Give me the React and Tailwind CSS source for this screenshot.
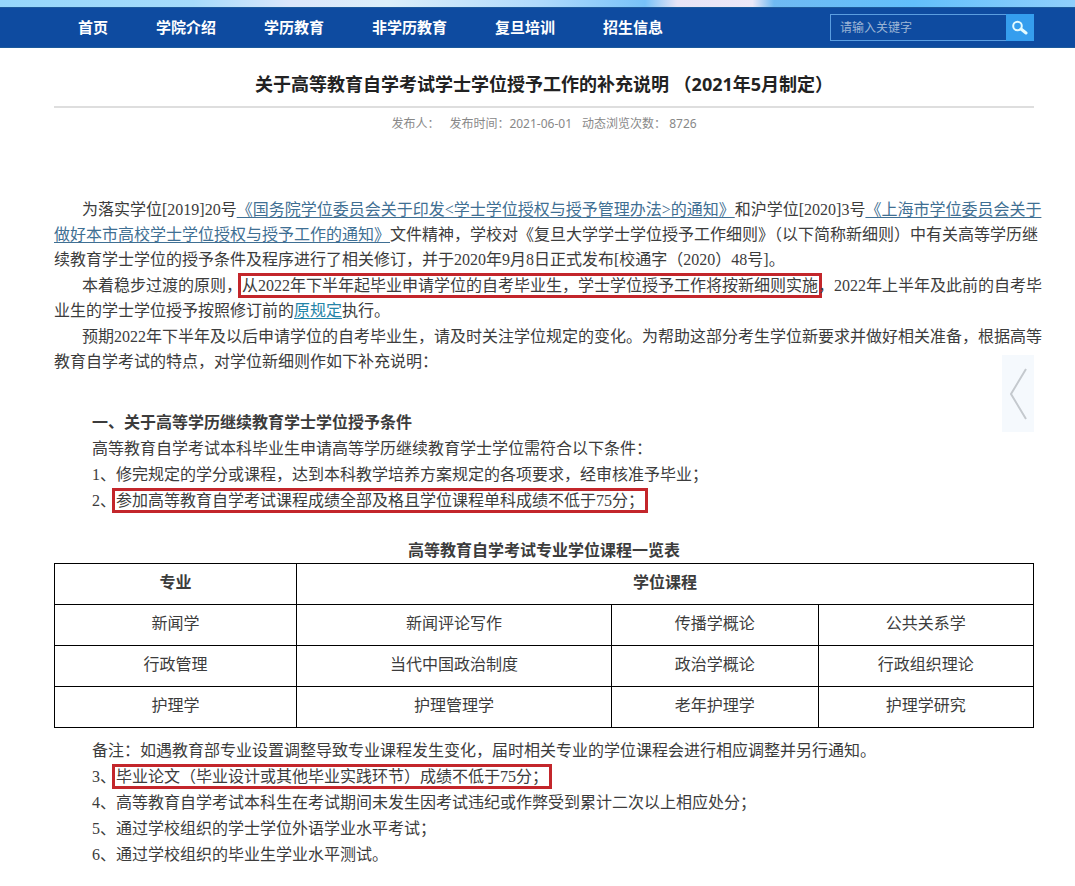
import React from "react";

const navItems = ["首页", "学院介绍", "学历教育", "非学历教育", "复旦培训", "招生信息"];

const courses = [
  ["新闻学", "新闻评论写作", "传播学概论", "公共关系学"],
  ["行政管理", "当代中国政治制度", "政治学概论", "行政组织理论"],
  ["护理学", "护理管理学", "老年护理学", "护理学研究"],
];

const cell = "h-[41px] border border-black pb-1 text-center align-middle";

function Mark({ children }) {
  return <span className="outline-3 outline-offset-1 outline-[#c3262b]">{children}</span>;
}

function Doc({ children }) {
  return (
    <a href="#" className="text-[#3f6f93] underline underline-offset-2">
      {children}
    </a>
  );
}

function Header() {
  return (
    <header>
      <div className="h-[7px] bg-[linear-gradient(90deg,#95d6fb_0%,#a5dbfb_18%,#dbe6fb_27%,#dceffa_36%,#b0dafc_50%,#78c2f8_60%,#e8e4f6_63%,#ece8f8_70%,#6fbaf3_72%,#62bffb_85%,#90cffc_100%)]" />
      <div className="flex h-[41px] items-center justify-between border-y border-[#1c5a9c] bg-[#0e4ba0] pr-[41px] pl-[78px]">
        <nav className="flex gap-12 text-[15px] font-bold text-white">
          {navItems.map((item) => (
            <a key={item} href="#">
              {item}
            </a>
          ))}
        </nav>
        <form className="flex h-[27px] w-[204px]" onSubmit={(e) => e.preventDefault()}>
          <input
            type="text"
            aria-label="请输入关键字"
            placeholder="请输入关键字"
            className="min-w-0 flex-1 border border-r-0 border-[#5b9ee0] bg-transparent px-[9px] text-xs text-white outline-none placeholder:text-[#9db6d6]"
          />
          <button type="submit" aria-label="搜索" className="flex w-7 items-center justify-center bg-[#359eee]">
            <svg viewBox="0 0 16 16" className="size-4" fill="none" stroke="#e4fbff">
              <circle cx="5.5" cy="6" r="4.3" strokeWidth="2" />
              <path d="M9 9 L14 13" strokeWidth="3" strokeLinecap="round" />
            </svg>
          </button>
        </form>
      </div>
    </header>
  );
}

export default function App() {
  return (
    <div className="relative min-h-screen overflow-x-hidden bg-white pb-4 font-['Noto_Sans','Noto_Sans_CJK_SC',sans-serif] text-[#3c3c3c]">
      <Header />
      <main className="mr-[41px] ml-[54px]">
        <h1 className="border-b-2 border-[#dedede] pt-6 pb-[10px] text-center text-lg leading-6 font-bold text-[#222]">
          关于高等教育自学考试学士学位授予工作的补充说明 （2021年5月制定）
        </h1>
        <div className="mt-2 flex justify-center gap-[10px] text-xs leading-4 text-[#888]">
          <span>发布人：</span>
          <span>发布时间：2021-06-01</span>
          <span>动态浏览次数： 8726</span>
        </div>
        <article className="mt-[65px] font-['Liberation_Serif','Noto_Sans_CJK_SC',sans-serif] text-base leading-[25px]">
          <div className="-mr-5 flex flex-col gap-px whitespace-nowrap">
            <p className="indent-7">
              为落实学位[2019]20号
              <Doc>《国务院学位委员会关于印发&lt;学士学位授权与授予管理办法&gt;的通知》</Doc>
              和沪学位[2020]3号
              <Doc>
                《上海市学位委员会关于
                <br />
                做好本市高校学士学位授权与授予工作的通知》
              </Doc>
              文件精神，学校对《复旦大学学士学位授予工作细则》（以下简称新细则）中有关高等学历继
              <br />
              续教育学士学位的授予条件及程序进行了相关修订，并于2020年9月8日正式发布[校通字（2020）48号]。
            </p>
            <p className="indent-7">
              本着稳步过渡的原则，
              <Mark>从2022年下半年起毕业申请学位的自考毕业生，学士学位授予工作将按新细则实施</Mark>
              <span className="relative">，</span>
              2022年上半年及此前的自考毕
              <br />
              业生的学士学位授予按照修订前的
              <a href="#" className="text-[#2484a8] underline underline-offset-2">
                原规定
              </a>
              执行。
            </p>
            <p className="indent-7">
              预期2022年下半年及以后申请学位的自考毕业生，请及时关注学位规定的变化。为帮助这部分考生学位新要求并做好相关准备，根据高等
              <br />
              教育自学考试的特点，对学位新细则作如下补充说明：
            </p>
          </div>

          <section className="mt-9 flex flex-col gap-px pl-[38px]">
            <h2 className="font-bold">一、关于高等学历继续教育学士学位授予条件</h2>
            <p>高等教育自学考试本科毕业生申请高等学历继续教育学士学位需符合以下条件：</p>
            <p>1、修完规定的学分或课程，达到本科教学培养方案规定的各项要求，经审核准予毕业；</p>
            <p>
              2、<Mark>参加高等教育自学考试课程成绩全部及格且学位课程单科成绩不低于75分；</Mark>
            </p>
          </section>

          <table className="mt-[25px] w-full table-fixed border-collapse">
            <caption className="font-bold">高等教育自学考试专业学位课程一览表</caption>
            <colgroup>
              <col className="w-[24.7%]" />
              <col className="w-[32.2%]" />
              <col className="w-[21.1%]" />
              <col className="w-[22%]" />
            </colgroup>
            <thead>
              <tr>
                <th className={cell}>专业</th>
                <th className={cell} colSpan={3}>
                  学位课程
                </th>
              </tr>
            </thead>
            <tbody>
              {courses.map((row) => (
                <tr key={row[0]}>
                  {row.map((text) => (
                    <td key={text} className={cell}>
                      {text}
                    </td>
                  ))}
                </tr>
              ))}
            </tbody>
          </table>

          <section className="mt-[10px] flex flex-col gap-px pl-[38px]">
            <p>备注：如遇教育部专业设置调整导致专业课程发生变化，届时相关专业的学位课程会进行相应调整并另行通知。</p>
            <p>
              3、<Mark>毕业论文（毕业设计或其他毕业实践环节）成绩不低于75分；</Mark>
            </p>
            <p>4、高等教育自学考试本科生在考试期间未发生因考试违纪或作弊受到累计二次以上相应处分；</p>
            <p>5、通过学校组织的学士学位外语学业水平考试；</p>
            <p>6、通过学校组织的毕业生学业水平测试。</p>
          </section>
        </article>
      </main>
      <button
        type="button"
        aria-label="展开侧栏"
        className="absolute top-[355px] right-[41px] flex h-[77px] w-8 items-center justify-center bg-[#f5f9fd]"
      >
        <svg viewBox="0 0 18 52" className="h-[52px] w-[18px]" fill="none" stroke="#c4c9ce" strokeWidth="2">
          <path d="M17 1 L2 26 L17 51" />
        </svg>
      </button>
    </div>
  );
}
